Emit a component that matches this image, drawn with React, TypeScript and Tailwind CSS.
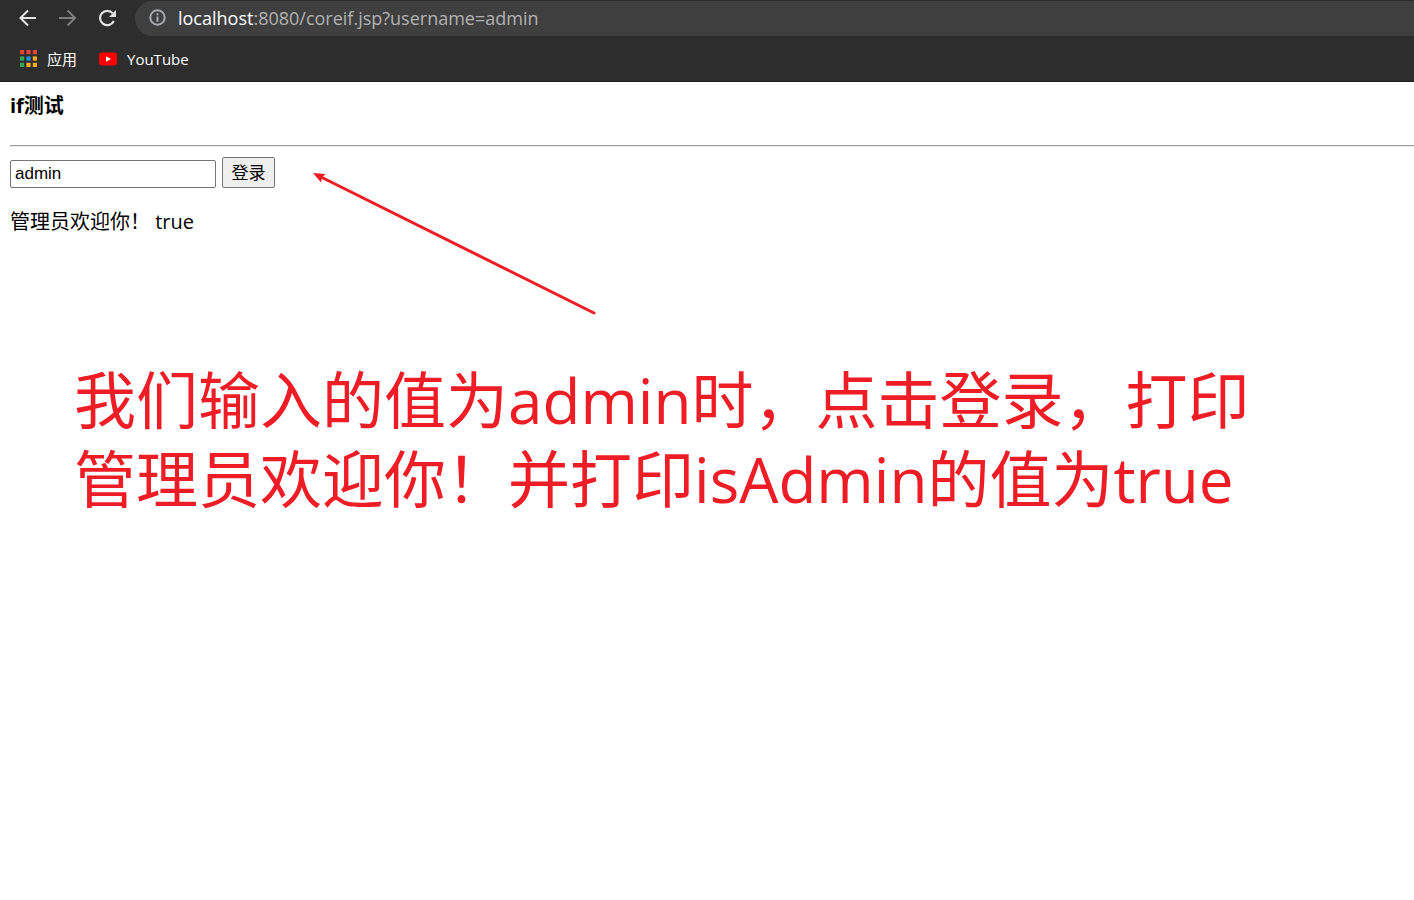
import { useState } from "react";

const appColors = [
  "#ea4335", "#ea4335", "#ea4335",
  "#34a853", "#2490f0", "#fbae17",
  "#34a853", "#fbae17", "#fbae17",
];

function BackIcon() {
  return (
    <svg width="18" height="18" viewBox="0 0 18 18" fill="none" stroke="currentColor" strokeWidth="2" aria-hidden="true">
      <path d="M18 9H2.500M10 1.500L2.500 9l7.500 7.500" />
    </svg>
  );
}

function ForwardIcon() {
  return (
    <svg width="18" height="18" viewBox="0 0 18 18" fill="none" stroke="currentColor" strokeWidth="2" aria-hidden="true">
      <path d="M1 9h15.500M9.500 1.500L17 9l-7.500 7.500" />
    </svg>
  );
}

function ReloadIcon() {
  return (
    <svg width="18" height="18" viewBox="0 0 18 18" fill="none" aria-hidden="true">
      <path d="M15.800 12A7.200 7.200 0 1 1 14.800 4.400" stroke="currentColor" strokeWidth="2.200" />
      <path d="M18 1v7h-7z" fill="currentColor" />
    </svg>
  );
}

function InfoIcon() {
  return (
    <svg width="17" height="17" viewBox="0 0 17 17" fill="none" aria-hidden="true">
      <circle cx="8.500" cy="8.500" r="7.200" stroke="#a6a9ad" strokeWidth="2" />
      <path d="M7.500 4.200h2v2h-2zM7.500 7.500h2v5.300h-2z" fill="#a6a9ad" />
    </svg>
  );
}

function AppsIcon() {
  return (
    <svg width="17" height="17" viewBox="0 0 17 17" aria-hidden="true">
      {appColors.map((color, i) => (
        <rect key={i} x={(i % 3) * 6.4} y={Math.floor(i / 3) * 6.4} width="4.200" height="4.200" fill={color} />
      ))}
    </svg>
  );
}

function YouTubeIcon() {
  return (
    <svg width="18" height="14" viewBox="0 0 18 14" aria-hidden="true">
      <rect y="0.500" width="18" height="13" rx="3" fill="#ff0000" />
      <path d="M7 4.200v5.600L12 7z" fill="#fff" />
    </svg>
  );
}

function Toolbar() {
  return (
    <header className="border-b border-[#1c1c1c] bg-[#2d2d2d] pt-px">
      <div className="flex h-[35px] items-center">
        <nav className="flex w-[135px] shrink-0 items-center gap-[22px] pb-0.5 pl-[18px]" aria-label="History">
          <button type="button" aria-label="Back" className="text-[#e4e4e4]"><BackIcon /></button>
          <button type="button" aria-label="Forward" className="text-[#7d7d7d]"><ForwardIcon /></button>
          <button type="button" aria-label="Reload" className="text-[#e4e4e4]"><ReloadIcon /></button>
        </nav>
        <div className="flex h-full flex-1 items-center gap-3 rounded-l-full bg-[#3f3f3f] pb-0.5 pl-3.5">
          <InfoIcon />
          <p className="whitespace-nowrap text-[18px] leading-6 text-[#b2b2b2]">
            <span className="text-white">localhost</span>:8080/coreif.jsp?username=admin
          </p>
        </div>
      </div>
      <nav className="flex h-[45px] items-center gap-[22px] pl-5 text-[15px] leading-6 text-white" aria-label="Bookmarks">
        <a href="#apps" className="flex items-center gap-2.5"><AppsIcon />应用</a>
        <a href="#youtube" className="flex items-center gap-2.5"><YouTubeIcon />YouTube</a>
      </nav>
    </header>
  );
}

function Arrow() {
  return (
    <svg className="pointer-events-none absolute left-[312px] top-[89px]" width="286" height="146" viewBox="0 0 286 146" aria-hidden="true">
      <path d="M8 5.500L282 142" stroke="#ee1c24" strokeWidth="3" strokeLinecap="round" />
      <path d="M1 2l12.500 1-3.500 3.500-1 5z" fill="#ee1c24" />
    </svg>
  );
}

export default function App() {
  const [username, setUsername] = useState("admin");
  return (
    <div className="min-h-screen bg-white font-['Open_Sans','Noto_Sans_CJK_SC',sans-serif] text-black">
      <Toolbar />
      <main className="relative pl-2.5 pt-2.5">
        <h1 className="text-[20px] leading-7 font-bold">if测试</h1>
        <hr className="mt-[25px] h-0.5 border-t border-b border-t-[#9a9a9a] border-b-[#eeeeee]" />
        <form className="mt-2.5 flex items-end gap-1.5" onSubmit={(e) => e.preventDefault()}>
          <input
            type="text"
            name="username"
            aria-label="username"
            value={username}
            onChange={(e) => setUsername(e.target.value)}
            className="h-7 w-[206px] rounded-[2px] border border-[#767676] px-1 font-['Liberation_Sans',sans-serif] text-[17px]"
          />
          <button type="submit" className="h-[31px] w-[53px] rounded-[2px] border border-[#767676] bg-[#efefef] text-[17px] leading-7">
            登录
          </button>
        </form>
        <p className="mt-5 text-[20px] leading-7">管理员欢迎你！ true</p>
        <Arrow />
        <p className="mt-[125px] pl-16 text-[62px] leading-[79px] text-[#ee1c24]">
          我们输入的值为admin时，点击登录，打印
          <br />
          管理员欢迎你！并打印isAdmin的值为true
        </p>
      </main>
    </div>
  );
}
